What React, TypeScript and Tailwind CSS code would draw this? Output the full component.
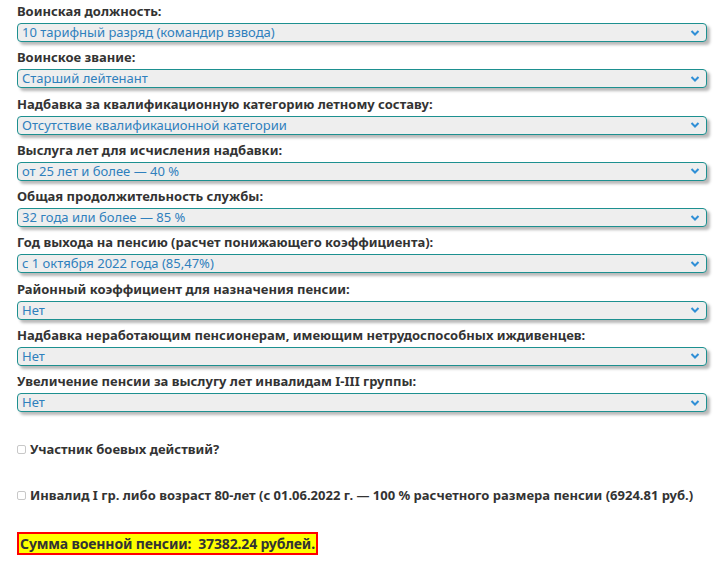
import React from "react";

const fields = [
  { label: "Воинская должность:", value: "10 тарифный разряд (командир взвода)" },
  { label: "Воинское звание:", value: "Старший лейтенант" },
  { label: "Надбавка за квалификационную категорию летному составу:", value: "Отсутствие квалификационной категории" },
  { label: "Выслуга лет для исчисления надбавки:", value: "от 25 лет и более — 40 %" },
  { label: "Общая продолжительность службы:", value: "32 года или более — 85 %" },
  { label: "Год выхода на пенсию (расчет понижающего коэффициента):", value: "с 1 октября 2022 года (85,47%)" },
  { label: "Районный коэффициент для назначения пенсии:", value: "Нет" },
  { label: "Надбавка неработающим пенсионерам, имеющим нетрудоспособных иждивенцев:", value: "Нет" },
  { label: "Увеличение пенсии за выслугу лет инвалидам I-III группы:", value: "Нет" },
];

function SelectBox({ value }: { value: string }) {
  return (
    <div className="flex items-center justify-between w-[690px] h-[19px] rounded-[4px] border border-[#1d9090] bg-[#eeeeee] pl-[4px] pr-[6px] shadow-[3px_3px_3px_rgba(0,0,0,0.28)]">
      <span className="text-[13px] leading-[17px] text-[#2f80bd]">{value}</span>
      <svg width="10" height="8" viewBox="0 0 10 8">
        <path d="M1.5 2 L5 5.5 L8.5 2" fill="none" stroke="#2f8fd6" strokeWidth="2" />
      </svg>
    </div>
  );
}

export default function App() {
  return (
    <div className="w-[722px] h-[576px] bg-white pl-[17px] font-['Noto_Sans',sans-serif] text-[#333333]">
      {fields.map((f, i) => (
        <div key={i} className="h-[46.25px] flex flex-col">
          <div className="h-[23px] pt-[1px] text-[13px] leading-[20px] font-bold">
            {f.label}
          </div>
          <SelectBox value={f.value} />
        </div>
      ))}

      <div className="mt-[23px] flex items-center gap-[4px] h-[20px] text-[13px] font-bold">
        <span className="w-[9px] h-[9px] border border-[#c8c8c8] rounded-[2px] bg-white" />
        <span>Участник боевых действий?</span>
      </div>

      <div className="mt-[26px] flex items-center gap-[4px] h-[20px] text-[13px] font-bold whitespace-nowrap">
        <span className="w-[9px] h-[9px] border border-[#c8c8c8] rounded-[2px] bg-white" />
        <span>Инвалид I гр. либо возраст 80-лет (с 01.06.2022 г. — 100 % расчетного размера пенсии (6924.81 руб.)</span>
      </div>

      <div className="mt-[27px] inline-flex h-[23px] items-center border-2 border-[#ff0000] bg-[#ffff00] px-[1px] text-[14px] font-bold tracking-[-0.15px] whitespace-pre">
        Сумма военной пенсии:  37382.24 рублей.
      </div>
    </div>
  );
}
